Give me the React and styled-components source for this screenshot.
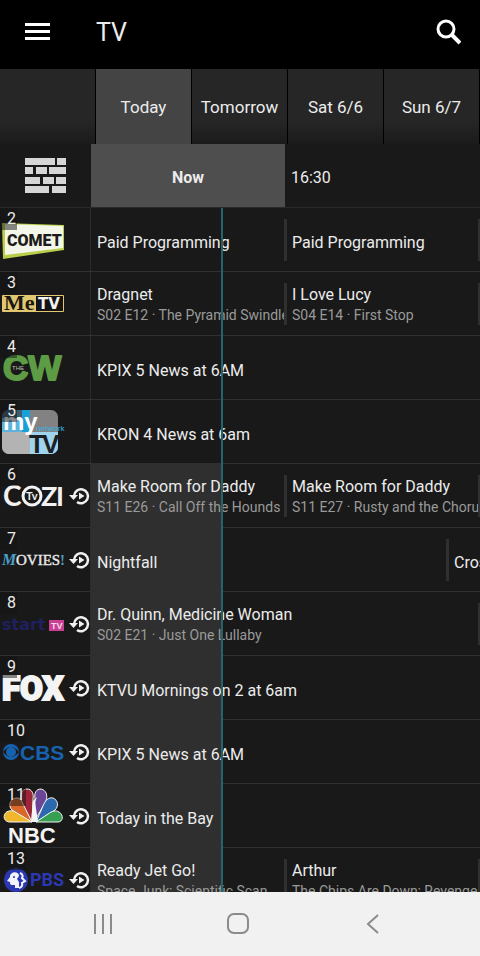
import React from 'react';
import styled, { createGlobalStyle } from 'styled-components';

const GlobalStyle = createGlobalStyle`
  * {
    box-sizing: border-box;
  }
  body {
    margin: 0;
    background: #191919;
    color: #ececec;
    font-family: Roboto, "Noto Sans", sans-serif;
  }
  button {
    padding: 0;
    border: 0;
    background: none;
    color: inherit;
    font: inherit;
    cursor: pointer;
  }
`;

const days = ['Today', 'Tomorrow', 'Sat 6/6', 'Sun 6/7'];

const CometLogo = () => (
  <Logo viewBox="0 0 64 64">
    <polygon points="2,15 64,17 64,42 3,51" fill="#b9cf4c" />
    <polygon points="5,16 63,18 63,40 5,47" fill="#f4f6ea" />
    <text x="7" y="38" fontFamily="Roboto" fontWeight="900" fontSize="16" fill="#1c1c1a">COMET</text>
  </Logo>
);

const MeTvLogo = () => (
  <Logo viewBox="0 0 64 64">
    <rect x="2" y="23" width="62" height="17" rx="1" fill="#e3c670" />
    <rect x="36" y="24" width="27" height="15" fill="#141414" />
    <text x="4" y="38" fontFamily="Liberation Serif" fontWeight="700" fontSize="22" fill="#1a1712">Me</text>
    <text x="38" y="37" fontFamily="DejaVu Sans" fontWeight="700" fontSize="15" fill="#f3f3f3">TV</text>
  </Logo>
);

const CwLogo = () => (
  <Logo viewBox="0 0 64 64">
    <text x="3" y="44" fontFamily="Liberation Sans" fontWeight="700" fontSize="35" fill="#5d9c45" stroke="#5d9c45" strokeWidth="2" strokeLinejoin="round">CW</text>
    <text x="12" y="34" fontFamily="Liberation Sans" fontSize="6" fill="#b9c4b4">THE</text>
  </Logo>
);

const MyTvLogo = () => (
  <Logo viewBox="0 0 64 64">
    <clipPath id="mytv">
      <rect x="2" y="10" width="56" height="44" rx="7" />
    </clipPath>
    <g clipPath="url(#mytv)">
      <rect x="2" y="10" width="56" height="44" fill="#828282" />
      <rect x="2" y="10" width="20" height="22" fill="#3b5f70" />
      <rect x="2" y="18" width="20" height="14" fill="#5eb4dc" />
      <rect x="22" y="10" width="8" height="22" fill="#1a9fd6" />
      <rect x="2" y="32" width="28" height="22" fill="#b3b3b3" />
      <rect x="30" y="32" width="28" height="22" fill="#9fd4ee" />
    </g>
    <text x="29" y="53" fontFamily="Liberation Sans" fontWeight="700" fontSize="26" fill="#1b2024">T</text>
    <text x="42" y="53" fontFamily="Liberation Sans" fontWeight="700" fontSize="26" fill="#1b2024">V</text>
    <text x="3" y="30" fontFamily="Liberation Sans" fontWeight="700" fontSize="24" fill="#ffffff">my</text>
    <text x="36" y="31" fontFamily="Roboto" fontSize="8" fill="#35b4e0">network</text>
  </Logo>
);

const CoziLogo = () => (
  <Logo viewBox="0 0 64 64" fill="#f2f2f2" fontFamily="Lato" fontWeight="700">
    <text x="3" y="42" fontSize="28">C</text>
    <circle cx="32" cy="32" r="9" fill="none" stroke="#f2f2f2" strokeWidth="3" />
    <text x="26" y="36" fontSize="11">Tv</text>
    <text x="41" y="42" fontSize="27">Z</text>
    <text x="56" y="42" fontSize="27">I</text>
  </Logo>
);

const MoviesLogo = () => (
  <Logo viewBox="0 0 64 64" fontFamily="Liberation Serif">
    <text x="2" y="37" fontSize="16" fontWeight="700" fontStyle="italic" fill="#4c9fc6">M</text>
    <text x="16" y="37" fontSize="15" fill="#e9e9e9" stroke="#e9e9e9" strokeWidth="0.4">OVIES</text>
    <text x="60" y="37" fontSize="15" fontWeight="700" fill="#4c9fc6">!</text>
  </Logo>
);

const StartLogo = () => (
  <Logo viewBox="0 0 64 64">
    <text x="2" y="38" fontFamily="DejaVu Sans" fontWeight="700" fontSize="16" fill="#1f2060">start</text>
    <rect x="49" y="28" width="15" height="11" fill="#c93f93" />
    <text x="51" y="37" fontFamily="Liberation Sans" fontWeight="700" fontSize="9" fill="#f0dce8">TV</text>
  </Logo>
);

const FoxLogo = () => (
  <Logo viewBox="0 0 64 64">
    <text x="2" y="44" fontFamily="Roboto" fontWeight="900" fontSize="33" fill="#f4f4f4" stroke="#f4f4f4" strokeWidth="2">FOX</text>
  </Logo>
);

const CbsLogo = () => (
  <Logo viewBox="0 0 64 64" fill="#1762ae">
    <circle cx="11" cy="32" r="8" />
    <path d="M3 32Q11 22 19 32Q11 42 3 32Z" fill="#191919" />
    <circle cx="11" cy="32" r="5" />
    <text x="20" y="40" fontFamily="Liberation Sans" fontWeight="700" fontSize="21">CBS</text>
  </Logo>
);

const NbcLogo = () => (
  <Logo viewBox="0 0 64 64">
    <g stroke="#f4f4f4" strokeWidth="1">
      <path d="M32 38L9 38C2 37 3 28 9 27C13 26 16 28 19 30Z" fill="#f0b62c" />
      <path d="M32 38L12 26C7 21 11 13 18 14C22 15 24 19 25 22Z" fill="#d9682b" />
      <path d="M32 38L22 18C19 11 22 5 27 5C32 5 34 10 33 15Z" fill="#9c2638" />
      <path d="M34 38L35 15C34 9 36 5 41 5C46 6 48 11 46 17Z" fill="#6b4696" />
      <path d="M36 38L43 22C45 17 48 13 53 14C58 16 59 22 55 26Z" fill="#2b68ad" />
      <path d="M36 38L48 30C52 27 56 26 59 28C64 31 63 38 58 38Z" fill="#35a052" />
    </g>
    <path d="M31 38L33 17L37 13L35 18L38 38Z" fill="#f4f4f4" />
    <text x="8" y="59" fontFamily="Liberation Sans" fontWeight="700" fontSize="22" fill="#f4f4f4">NBC</text>
  </Logo>
);

const PbsLogo = () => (
  <Logo viewBox="0 0 64 64">
    <circle cx="16" cy="32" r="12" fill="#2b38b4" />
    <path d="M15 40V37H12C10 37 10 35 10 34L7 33L10 29C10 23 19 23 19 28L17 31L19 34V40Z" fill="#f3f3fa" />
    <path d="M20 25Q24 27 22 30L25 33L22 35Q23 39 19 40" fill="none" stroke="#f3f3fa" strokeWidth="2" />
    <circle cx="14" cy="29" r="1" fill="#2b38b4" />
    <text x="30" y="38" fontFamily="Roboto" fontWeight="700" fontSize="18" fill="#2b38b4">PBS</text>
  </Logo>
);

const channels = [
  {
    number: 2, name: 'Comet', logo: CometLogo,
    programs: [{ title: 'Paid Programming', width: 193 }, { title: 'Paid Programming', width: 194 }, { title: '', width: 194 }],
  },
  {
    number: 3, name: 'MeTV', logo: MeTvLogo,
    programs: [
      { title: 'Dragnet', detail: 'S02 E12 · The Pyramid Swindle', width: 193 },
      { title: 'I Love Lucy', detail: 'S04 E14 · First Stop', width: 194 },
      { title: '', width: 194 },
    ],
  },
  { number: 4, name: 'The CW', logo: CwLogo, programs: [{ title: 'KPIX 5 News at 6AM', width: 581 }] },
  { number: 5, name: 'MyNetworkTV', logo: MyTvLogo, programs: [{ title: 'KRON 4 News at 6am', width: 581 }] },
  {
    number: 6, name: 'Cozi TV', logo: CoziLogo, replay: true,
    programs: [
      { title: 'Make Room for Daddy', detail: 'S11 E26 · Call Off the Hounds', width: 193 },
      { title: 'Make Room for Daddy', detail: 'S11 E27 · Rusty and the Chorus', width: 194 },
      { title: '', width: 194 },
    ],
  },
  {
    number: 7, name: 'Movies!', logo: MoviesLogo, replay: true,
    programs: [{ title: 'Nightfall', width: 355 }, { title: 'Crossfire', width: 388 }],
  },
  {
    number: 8, name: 'Start TV', logo: StartLogo, replay: true,
    programs: [
      { title: 'Dr. Quinn, Medicine Woman', detail: 'S02 E21 · Just One Lullaby', width: 387 },
      { title: '', width: 194 },
    ],
  },
  { number: 9, name: 'Fox', logo: FoxLogo, replay: true, programs: [{ title: 'KTVU Mornings on 2 at 6am', width: 581 }] },
  { number: 10, name: 'CBS', logo: CbsLogo, replay: true, programs: [{ title: 'KPIX 5 News at 6AM', width: 581 }] },
  { number: 11, name: 'NBC', logo: NbcLogo, replay: true, programs: [{ title: 'Today in the Bay', width: 581 }] },
  {
    number: 13, name: 'PBS', logo: PbsLogo, replay: true,
    programs: [
      { title: 'Ready Jet Go!', detail: 'Space Junk; Scientific Scan', width: 193 },
      { title: 'Arthur', detail: 'The Chips Are Down; Revenge', width: 194 },
      { title: '', width: 194 },
    ],
  },
];

const ReplayIcon = () => (
  <svg width="20" height="20" viewBox="0 0 20 20" aria-label="Replay available">
    <path d="M4 10A7 7 0 1 1 7 16" fill="none" stroke="#f0f0f0" strokeWidth="2.5" />
    <path d="M-1 9H8L3.5 14Z" fill="#f0f0f0" />
    <path d="M9 6.5L14.5 10L9 13.5Z" fill="#f0f0f0" />
  </svg>
);

const BricksIcon = () => (
  <svg width="41" height="35" viewBox="0 0 41 35" fill="#d6d6d6">
    <path d="M0 0H30V7H0Z M32 0H41V7H32Z" />
    <path d="M0 9H8V16H0Z M11 9H22V16H11Z M24 9H41V16H24Z" />
    <path d="M0 19H15V26H0Z M18 19H29V26H18Z M31 19H41V26H31Z" />
    <path d="M0 28H24V35H0Z M27 28H41V35H27Z" />
  </svg>
);

const App = () => {
  return (
    <Screen>
      <GlobalStyle />
      <Header>
        <IconButton aria-label="Menu">
          <svg width="26" height="20" viewBox="0 0 26 20" fill="#fff">
            <path d="M0 1H25V4H0Z M0 8H25V11H0Z M0 15H25V18H0Z" />
          </svg>
        </IconButton>
        <Title>TV</Title>
        <IconButton aria-label="Search">
          <svg width="26" height="26" viewBox="0 0 26 26" fill="none" stroke="#fff" strokeWidth="3">
            <circle cx="11" cy="10" r="8" />
            <path d="M16 15L25 24" strokeWidth="4" />
          </svg>
        </IconButton>
      </Header>
      <Days>
        <DayBlank />
        {days.map((day, i) => (
          <Day key={day} $active={i === 0}>{day}</Day>
        ))}
      </Days>
      <Times>
        <GridButton aria-label="Channel layout"><BricksIcon /></GridButton>
        <NowButton>Now</NowButton>
        <Time>16:30</Time>
      </Times>
      <Guide>
        {channels.map(({ number, name, logo: ChannelLogo, replay, programs }) => (
          <Row key={number}>
            <Channel aria-label={name}>
              <ChannelLogo />
              <Number>{number}</Number>
              {replay && <ReplayIcon />}
            </Channel>
            <Programs>
              {replay && <Elapsed />}
              {programs.map((program, i) => (
                <Program key={i} $width={program.width} $first={i === 0} $tall={!!program.detail}>
                  <ProgramTitle>{program.title}</ProgramTitle>
                  {program.detail && <Detail>{program.detail}</Detail>}
                </Program>
              ))}
            </Programs>
          </Row>
        ))}
        <NowLine />
      </Guide>
      <SystemBar>
        <IconButton aria-label="Recent apps">
          <svg width="20" height="20" viewBox="0 0 20 20" stroke="#8b8b8b" strokeWidth="2">
            <path d="M2 0V20M10 0V20M18 0V20" />
          </svg>
        </IconButton>
        <IconButton aria-label="Home">
          <svg width="22" height="22" viewBox="0 0 22 22" fill="none" stroke="#8b8b8b" strokeWidth="2">
            <rect x="1" y="1" width="20" height="19" rx="6" />
          </svg>
        </IconButton>
        <IconButton aria-label="Back">
          <svg width="20" height="20" viewBox="0 0 20 20" fill="none" stroke="#8b8b8b" strokeWidth="2">
            <path d="M15 1L5 10L15 19" />
          </svg>
        </IconButton>
      </SystemBar>
    </Screen>
  );
};

const Screen = styled.div`
  display: flex;
  flex-direction: column;
  height: 100vh;
  overflow: hidden;
`;

const Header = styled.header`
  display: flex;
  flex: none;
  align-items: center;
  height: 69px;
  padding: 0 19px 6px 25px;
  background: #000;
`;

const IconButton = styled.button`
  display: flex;
  align-items: center;
  justify-content: center;
`;

const Title = styled.h1`
  flex: 1;
  margin: 0;
  padding: 2px 0 0 45px;
  font-size: 25px;
  line-height: 32px;
  font-weight: 400;
`;

const Days = styled.nav`
  display: grid;
  flex: none;
  grid-template-columns: repeat(5, 1fr);
  height: 75px;
`;

const DayBlank = styled.div`
  border-right: 1px solid #000;
  background: linear-gradient(#262626 70%, #1b1b1b);
`;

const Day = styled.button`
  border-right: 1px solid #000;
  background: ${p => (p.$active ? '#444' : 'linear-gradient(#262626 70%, #1b1b1b)')};
  font-size: 17px;
  white-space: nowrap;
`;

const Times = styled.div`
  display: flex;
  flex: none;
  height: 64px;
  border-bottom: 1px solid #292929;
  font-size: 16px;
`;

const GridButton = styled(IconButton)`
  width: 91px;
`;

const NowButton = styled.button`
  width: 194px;
  padding-top: 4px;
  background: #4e4e4e;
  font-weight: 700;
`;

const Time = styled.div`
  padding-left: 6px;
  line-height: 68px;
`;

const Guide = styled.main`
  position: relative;
  flex: 1;
  min-height: 0;
  overflow: hidden;
`;

const Row = styled.div`
  display: flex;
  height: 64px;
  border-bottom: 1px solid #303030;
`;

const Channel = styled.div`
  position: relative;
  display: flex;
  flex: none;
  align-items: center;
  gap: 6px;
  width: 91px;
  border-right: 1px solid #2b2b2b;

  svg {
    overflow: visible;
  }
`;

const Logo = styled.svg`
  flex: none;
  width: 64px;
  height: 64px;
`;

const Number = styled.span`
  position: absolute;
  top: 0;
  left: 0;
  padding: 0 1px 0 7px;
  background: rgba(20, 20, 20, 0.5);
  font-size: 16px;
  line-height: 22px;
`;

const Programs = styled.div`
  position: relative;
  display: flex;
  flex: 1;
  min-width: 0;
  overflow-x: clip;
`;

const Elapsed = styled.div`
  position: absolute;
  top: -1px;
  left: 0;
  width: 131px;
  height: 65px;
  background: #2f2f2f;
`;

const Program = styled.div`
  position: relative;
  display: flex;
  flex: none;
  flex-direction: column;
  justify-content: center;
  width: ${p => p.$width}px;
  padding-top: ${p => (p.$tall ? '3px' : '6px')};
  padding-left: ${p => (p.$first ? '6px' : '8px')};
  overflow: hidden;
  white-space: nowrap;

  &::before {
    content: "";
    display: ${p => (p.$first ? 'none' : 'block')};
    position: absolute;
    top: 11px;
    left: 0;
    width: 3px;
    height: 42px;
    background: #303030;
  }
`;

const ProgramTitle = styled.div`
  font-size: 16px;
  line-height: 20px;
`;

const Detail = styled.div`
  color: #9a9a9a;
  font-size: 14px;
  line-height: 20px;
`;

const NowLine = styled.div`
  position: absolute;
  top: 0;
  bottom: 0;
  left: 221px;
  width: 2px;
  background: #23646f;
`;

const SystemBar = styled.footer`
  display: flex;
  flex: none;
  align-items: center;
  justify-content: space-between;
  height: 64px;
  padding: 0 97px 0 93px;
  background: #f1f1f1;
`;

export default App;
